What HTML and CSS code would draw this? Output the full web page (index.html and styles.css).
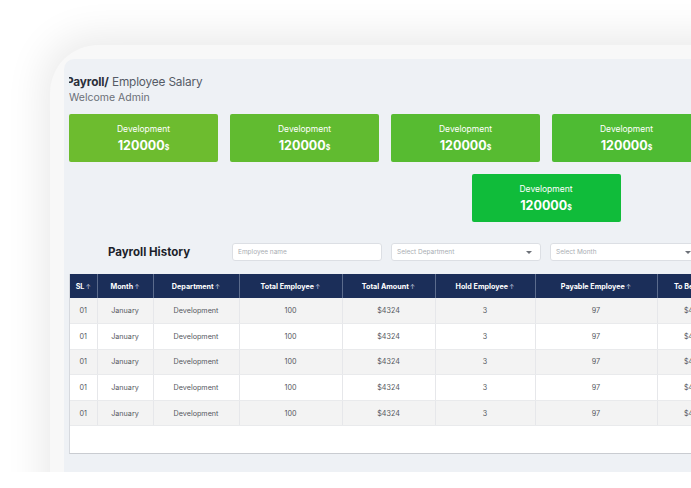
FILE: index.html
```html
<!DOCTYPE html>
<html lang="en">
<head>
<meta charset="utf-8">
<title>Payroll - Employee Salary</title>
<link rel="stylesheet" href="styles.css">
</head>
<body>
<div class="stage">
  <div class="device">
    <div class="screen">
      <div class="content">
        <div class="crumb"><b>Payroll/</b> Employee Salary</div>
        <div class="welcome">Welcome Admin</div>

        <div class="cards">
          <div class="card g1"><div class="card-label">Development</div><div class="card-value">120000<small>$</small></div></div>
          <div class="card g2"><div class="card-label">Development</div><div class="card-value">120000<small>$</small></div></div>
          <div class="card g3"><div class="card-label">Development</div><div class="card-value">120000<small>$</small></div></div>
          <div class="card g4"><div class="card-label">Development</div><div class="card-value">120000<small>$</small></div></div>
          <div class="card g5"><div class="card-label">Development</div><div class="card-value">120000<small>$</small></div></div>
          <div class="card g6"><div class="card-label">Development</div><div class="card-value">120000<small>$</small></div></div>
          <div class="card g7"><div class="card-label">Development</div><div class="card-value">120000<small>$</small></div></div>
        </div>

        <div class="toolbar">
          <h2 class="section-title">Payroll History</h2>
          <div class="field">Employee name</div>
          <div class="field select">Select Department<span class="caret"></span></div>
          <div class="field select">Select Month<span class="caret"></span></div>
        </div>

        <div class="table-wrap">
          <table class="grid">
            <colgroup>
              <col class="c1"><col class="c2"><col class="c3"><col class="c4"><col class="c5"><col class="c6"><col class="c7"><col class="c8">
            </colgroup>
            <thead>
              <tr>
                <th>SL<span class="arr">↑</span></th>
                <th>Month<span class="arr">↑</span></th>
                <th>Department<span class="arr">↑</span></th>
                <th>Total Employee<span class="arr">↑</span></th>
                <th>Total Amount<span class="arr">↑</span></th>
                <th>Hold Employee<span class="arr">↑</span></th>
                <th>Payable Employee<span class="arr">↑</span></th>
                <th>To Be Paid<span class="arr">↑</span></th>
              </tr>
            </thead>
            <tbody>
              <tr><td>01</td><td>January</td><td>Development</td><td>100</td><td>$4324</td><td>3</td><td>97</td><td>$4324</td></tr>
              <tr><td>01</td><td>January</td><td>Development</td><td>100</td><td>$4324</td><td>3</td><td>97</td><td>$4324</td></tr>
              <tr><td>01</td><td>January</td><td>Development</td><td>100</td><td>$4324</td><td>3</td><td>97</td><td>$4324</td></tr>
              <tr><td>01</td><td>January</td><td>Development</td><td>100</td><td>$4324</td><td>3</td><td>97</td><td>$4324</td></tr>
              <tr><td>01</td><td>January</td><td>Development</td><td>100</td><td>$4324</td><td>3</td><td>97</td><td>$4324</td></tr>
            </tbody>
          </table>
        </div>
      </div>
    </div>
  </div>
</div>
</body>
</html>
```

FILE: styles.css
```css
* { box-sizing: border-box; }

html, body {
  margin: 0;
  padding: 0;
  background: #ffffff;
  font-family: "Inter", "Open Sans", "DejaVu Sans", sans-serif;
}

.stage {
  width: 691px;
  height: 472px;
  overflow: hidden;
  padding: 45px 0 0 50px;
}

.device {
  width: 1100px;
  height: 560px;
  background: #f8f8f8;
  border-radius: 48px 0 0 0;
  box-shadow: -6px -8px 40px rgba(0, 0, 0, 0.09);
  padding: 14px 0 0 14px;
}

.screen {
  height: 100%;
  background: #eef1f5;
  border-radius: 10px 0 0 0;
  overflow: hidden;
}

.content {
  margin-left: 5px;
  padding-top: 15px;
  overflow: hidden;
}

.crumb {
  margin-left: -3px;
  font-size: 11.8px;
  line-height: 17px;
  color: #555b66;
  letter-spacing: -0.15px;
}
.crumb b {
  color: #2b2f3a;
  font-weight: 700;
}

.welcome {
  font-size: 10.5px;
  line-height: 14px;
  color: #6b6f77;
}

.cards {
  width: 954px;
  margin-top: 9px;
  display: flex;
  flex-wrap: wrap;
  justify-content: center;
  column-gap: 12px;
  row-gap: 12px;
}

.card {
  width: 149px;
  height: 48px;
  border-radius: 2px;
  color: #ffffff;
  text-align: center;
  padding-top: 9px;
}
.g1 { background: #6dbc2f; }
.g2 { background: #61bb30; }
.g3 { background: #57bb31; }
.g4 { background: #4ebb33; }
.g5 { background: #44bb34; }
.g6 { background: #3bbb35; }
.g7 { background: #10bc3a; }

.card-label {
  font-size: 8.5px;
  line-height: 12px;
}
.card-value {
  font-size: 12.5px;
  font-weight: 700;
  line-height: 18px;
  margin-top: 2px;
}
.card-value small {
  font-size: 7px;
  font-weight: 700;
}

.toolbar {
  margin-top: 21px;
  display: flex;
  align-items: center;
  height: 18px;
}

.section-title {
  width: 159px;
  margin: 0 4px 0 0;
  text-align: center;
  font-size: 11.5px;
  font-weight: 700;
  color: #1d1f2b;
  padding-left: 1px;
}

.field {
  position: relative;
  flex: 0 0 150px;
  height: 18px;
  margin-right: 9px;
  background: #ffffff;
  border: 1px solid #dcdfe4;
  border-radius: 3px;
  font-size: 6.5px;
  line-height: 16px;
  color: #a9adb3;
  padding-left: 5px;
}

.caret {
  position: absolute;
  right: 8px;
  top: 7px;
  width: 0;
  height: 0;
  border-left: 3px solid transparent;
  border-right: 3px solid transparent;
  border-top: 3px solid #6d7178;
}

.table-wrap {
  margin-top: 13px;
  width: 900px;
  height: 180px;
  background: #ffffff;
  border-left: 1px solid #d6d9de;
  border-bottom: 1px solid #c9ccd1;
  box-shadow: 0 1px 2px rgba(0, 0, 0, 0.08);
}

.grid {
  border-collapse: collapse;
  table-layout: fixed;
  width: 663px;
  font-size: 7.2px;
}
.c1 { width: 27px; }
.c2 { width: 56px; }
.c3 { width: 86px; }
.c4 { width: 103px; }
.c5 { width: 93px; }
.c6 { width: 100px; }
.c7 { width: 122px; }
.c8 { width: 76px; }

.grid th {
  height: 24px;
  background: #1b2e59;
  color: #ffffff;
  font-weight: 700;
  text-align: center;
  border-left: 1px solid #5b6b8c;
  padding: 0;
  white-space: nowrap;
}
.grid th:first-child { border-left: none; }

.arr {
  font-weight: 400;
  font-size: 6.5px;
  color: #c9d0e0;
  margin-left: 1px;
}

.grid td {
  height: 25.6px;
  text-align: center;
  color: #55585e;
  border-left: 1px solid #e6e7ea;
  border-bottom: 1px solid #e9eaec;
  padding: 0;
}
.grid td:first-child { border-left: none; }
.grid tbody tr:nth-child(odd) td { background: #f3f3f3; }
.grid tbody tr:nth-child(even) td { background: #ffffff; }
```
